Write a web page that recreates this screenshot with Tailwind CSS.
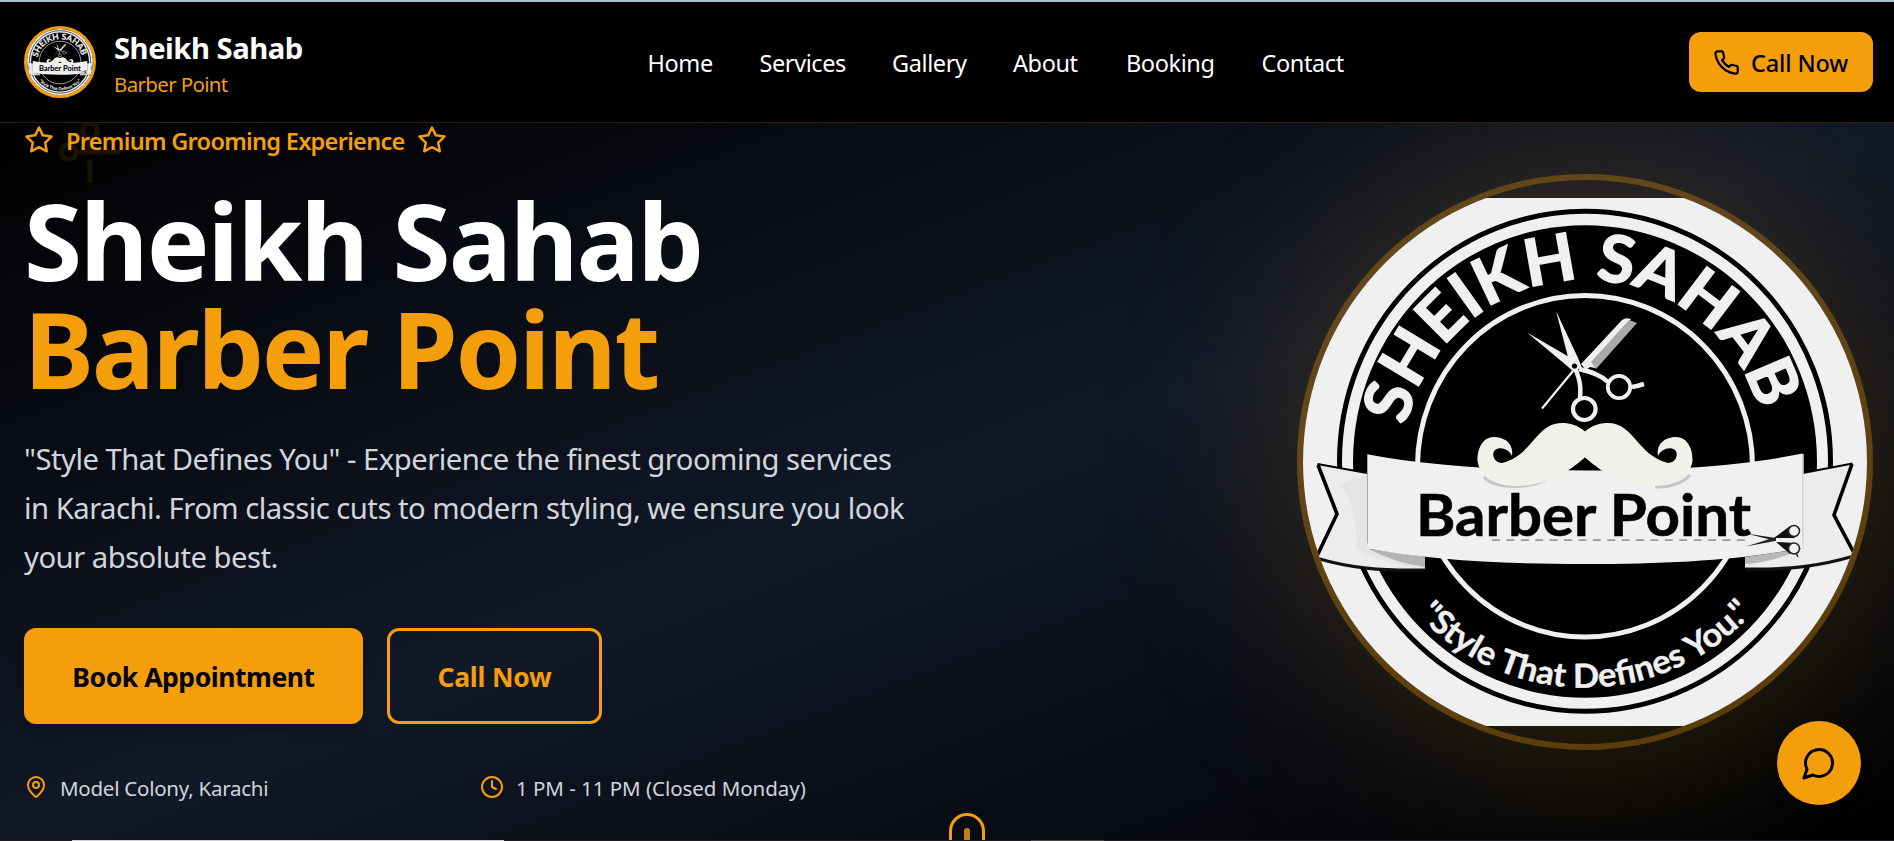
<!DOCTYPE html>
<html lang="en">
<head>
<meta charset="utf-8">
<title>Sheikh Sahab Barber Point</title>
<script src="https://cdn.jsdelivr.net/npm/@tailwindcss/browser@4"></script>
</head>
<body class="relative h-[841px] overflow-hidden bg-black font-['Noto_Sans',sans-serif] text-white">

<!-- Page edge above the header -->
<div class="h-px bg-[#b4c4b2]"></div>
<div class="h-px bg-[#9cc0e8]"></div>

<header class="relative z-20 flex h-[121px] items-center border-b border-[#2f1e02] bg-black pr-[21px] pl-6">
  <div class="flex w-[623.500px] items-center gap-[18px]">
    <div class="size-[72px] shrink-0 overflow-hidden rounded-full border-[3px] border-[#f59e0b]">
      <svg class="block size-full" viewBox="1321 198 528 528"><use href="#badge"/></svg>
    </div>
    <div class="pt-[3px] whitespace-nowrap">
      <div class="text-[29.25px] leading-10 font-bold tracking-[-0.5px]">Sheikh Sahab</div>
      <div class="text-[20.5px] leading-8 tracking-[-0.65px] text-[#f59e0b]">Barber Point</div>
    </div>
  </div>
  <nav class="flex pt-px text-[23.5px] leading-9 tracking-[-0.4px]">
    <a class="w-[112px]">Home</a>
    <a class="w-[132.500px]">Services</a>
    <a class="w-[121px]">Gallery</a>
    <a class="w-[113px]">About</a>
    <a class="w-[135.500px]">Booking</a>
    <a>Contact</a>
  </nav>
  <a class="ml-auto flex h-[60px] w-[184px] items-center gap-[11px] rounded-xl bg-[#f59e0b] pl-6 text-[23.5px] leading-9 font-medium tracking-[-0.15px] whitespace-nowrap text-black">
    <svg class="size-[27px] shrink-0" viewBox="0 0 24 24" fill="none" stroke="currentColor" stroke-width="2" stroke-linecap="round" stroke-linejoin="round"><path d="M22 16.920v3a2 2 0 0 1-2.180 2 19.790 19.790 0 0 1-8.630-3.070 19.500 19.500 0 0 1-6-6 19.790 19.790 0 0 1-3.070-8.670A2 2 0 0 1 4.110 2h3a2 2 0 0 1 2 1.720 12.840 12.840 0 0 0 .7 2.810 2 2 0 0 1-.45 2.110L8.090 9.910a16 16 0 0 0 6 6l1.270-1.270a2 2 0 0 1 2.110-.45 12.840 12.840 0 0 0 2.810.7A2 2 0 0 1 22 16.920z"/></svg>
    <span class="pt-px">Call Now</span>
  </a>
</header>

<main class="relative flex h-[717px] justify-between overflow-hidden bg-linear-to-br/srgb from-black via-[#111827] to-black pr-[21px] pl-6">
  <!-- drifting scissors -->
  <svg class="absolute top-[-1px] left-[60px] size-[60px] rotate-45 text-[#f59e0b] opacity-10" viewBox="0 0 24 24" fill="none" stroke="currentColor" stroke-width="2" stroke-linecap="round" stroke-linejoin="round"><path d="M9 6a3 3 0 1 1-6 0a3 3 0 1 1 6 0M8.120 8.120L12 12M20 4L8.120 15.880M9 18a3 3 0 1 1-6 0a3 3 0 1 1 6 0M14.800 14.800L20 20"/></svg>

  <div class="relative w-[900px]">
    <div class="flex h-9 items-center gap-3 text-[23.5px] leading-9 font-semibold tracking-[-0.7px] whitespace-nowrap text-[#f59e0b]">
      <svg class="mb-[3px] size-[30px] shrink-0" viewBox="0 0 24 24" fill="none" stroke="currentColor" stroke-width="2" stroke-linejoin="round"><path d="M12 2l3.090 6.260L22 9.270l-5 4.870 1.180 6.880L12 17.770l-6.180 3.250L7 14.140 2 9.270l6.910-1.010L12 2z"/></svg>
      <span class="w-[339px]">Premium Grooming Experience</span>
      <svg class="mb-[3px] size-[30px] shrink-0" viewBox="0 0 24 24" fill="none" stroke="currentColor" stroke-width="2" stroke-linejoin="round"><path d="M12 2l3.090 6.260L22 9.270l-5 4.870 1.180 6.880L12 17.770l-6.180 3.250L7 14.140 2 9.270l6.910-1.010L12 2z"/></svg>
    </div>
    <h1 class="mt-[27px] text-[105.3px] leading-[108px] font-bold whitespace-nowrap">
      <span class="block tracking-[-1.9px]">Sheikh Sahab</span>
      <span class="block tracking-[-2.25px] text-[#f59e0b]">Barber Point</span>
    </h1>
    <p class="mt-[33px] text-[29.25px] leading-[48.75px] tracking-[-0.52px] whitespace-nowrap text-gray-300">"Style That Defines You" - Experience the finest grooming services<br>in Karachi. From classic cuts to modern styling, we ensure you look<br>your absolute best.</p>
    <div class="mt-[46.75px] flex h-24 gap-6 text-[26.5px] font-bold whitespace-nowrap">
      <a class="flex w-[339px] items-center justify-center rounded-xl bg-[#f59e0b] pt-1 tracking-[-0.45px] text-black shadow-lg">Book Appointment</a>
      <a class="flex w-[215px] items-center justify-center rounded-xl border-[3px] border-[#f59e0b] pt-1 tracking-[-0.2px] text-[#f59e0b]">Call Now</a>
    </div>
    <div class="mt-[49px] grid h-[30px] grid-cols-[444px_1fr] gap-3 text-[20.5px] leading-[30px] whitespace-nowrap text-gray-300">
      <div class="flex items-center gap-3 tracking-[-0.25px]">
        <svg class="mb-[2px] size-6 text-[#f59e0b]" viewBox="0 0 24 24" fill="none" stroke="currentColor" stroke-width="2" stroke-linecap="round" stroke-linejoin="round"><path d="M20 10c0 4.993-5.539 10.193-7.399 11.799a1 1 0 0 1-1.202 0C9.539 20.193 4 14.993 4 10a8 8 0 0 1 16 0"/><circle cx="12" cy="10" r="3"/></svg>
        Model Colony, Karachi
      </div>
      <div class="flex items-center gap-3 tracking-[-0.04px]">
        <svg class="mb-[2px] size-6 text-[#f59e0b]" viewBox="0 0 24 24" fill="none" stroke="currentColor" stroke-width="2" stroke-linecap="round" stroke-linejoin="round"><circle cx="12" cy="12" r="10"/><path d="M12 6v6l4 2"/></svg>
        1 PM - 11 PM (Closed Monday)
      </div>
    </div>
  </div>

  <div class="relative mt-[51px] size-[576px]">
    <div class="absolute inset-0 rounded-full bg-[#f59e0b]/20 blur-[96px]"></div>
    <div class="relative size-full overflow-hidden rounded-full border-[6px] border-[#f59e0b]/30">
      <svg class="block size-full" viewBox="1303 180 564 564">
        <g id="badge">
          <rect x="1297" y="198" width="576" height="528" fill="#f0f0f0"/>
          <ellipse cx="1585" cy="461.300" rx="245.500" ry="250" fill="none" stroke="#000" stroke-width="5"/>
          <ellipse cx="1585" cy="461.500" rx="232" ry="236.300" fill="#000"/>
          <ellipse cx="1585" cy="466.200" rx="167.500" ry="170.800" fill="none" stroke="#f0f0f0" stroke-width="5"/>
          <path id="arcTop" d="M1406.500 426A182 182 0 0 1 1763 424" fill="none"/>
          <path id="arcBottom" d="M1418 615A227 227 0 0 0 1757 608" fill="none"/>
          <text font-family="Lato" font-weight="700" font-size="65" fill="#f0f0f0" stroke="#f0f0f0" stroke-width="1.500" textLength="484" lengthAdjust="spacingAndGlyphs"><textPath href="#arcTop">SHEIKH SAHAB</textPath></text>
          <text font-family="Lato" font-weight="700" font-size="33" fill="#f0f0f0" stroke="#f0f0f0" stroke-width=".4" textLength="376" lengthAdjust="spacingAndGlyphs"><textPath href="#arcBottom">"Style That Defines You."</textPath></text>
          <!-- scissors and comb -->
          <path d="M1573 371L1542 408.500" stroke="#f0f0f0" stroke-width="2.200"/>
          <path d="M1581 364L1622 320Q1626 317 1631 319L1595 368L1590 367L1586 370Z" fill="#f0f0f0"/>
          <path d="M1591 362L1629 320L1637 323L1596 369Z" fill="#aaa"/>
          <path d="M1527 332.500L1571 358L1580 368L1574 372L1566 365Z M1556 311L1578 358L1582 368L1574 370L1568 357Z" fill="#f0f0f0"/>
          <path d="M1575 368C1580 380 1581 386 1580 398M1579 369C1592 372 1601 375 1608 382M1632 387L1637 386L1644 384" fill="none" stroke="#f0f0f0" stroke-width="4.500"/>
          <ellipse cx="1584.300" cy="409" rx="11.300" ry="11" fill="none" stroke="#f0f0f0" stroke-width="4.200"/>
          <circle cx="1619" cy="387" r="11.200" fill="none" stroke="#f0f0f0" stroke-width="3.800"/>
          <circle cx="1574.500" cy="366" r="2.600" fill="#000"/>
          <!-- ribbon tails -->
          <path d="M1317.500 464L1367 473V549L1425 557V570C1385 571 1350 566 1318 557L1337.500 514Z" fill="#ececec"/>
          <path d="M1367 475V549L1425 559V568Q1385 566 1357 549Q1356 500 1340 484Z" fill="#dedede" opacity=".5"/>
          <path d="M1852.500 463L1802.700 473V549L1745 559V569C1790 570 1820 566 1852 556L1834 515Z" fill="#ececec"/>
          <path d="M1367 473L1317.500 464" stroke="#000" stroke-width="1.800" fill="none"/>
          <path d="M1318 465L1337 514L1317 556M1852 464L1834 515L1854 553" stroke="#000" stroke-width="3.600" fill="none"/>
          <path d="M1802.700 473L1852.500 463.500" stroke="#000" stroke-width="1.800"/>
          <path d="M1316 558C1350 568 1380 571 1425 570M1745 569C1790 570 1820 566 1854 556" stroke="#111" stroke-width="3.200" fill="none"/>
          <!-- ribbon folds -->
          <path d="M1369 549L1425 557V567Q1395 563 1369 549Z" fill="#b4b4b4"/>
          <path d="M1801 549L1745 557V564Q1775 562 1801 549Z" fill="#b8b8b8"/>
          <!-- ribbon front -->
          <path d="M1367.300 454.300C1430 466 1500 470.500 1585 470.500C1670 470.500 1740 466 1802.700 453.500V548C1740 560 1670 564 1585 564C1500 564 1430 560 1367.300 548.500Z" fill="#f0f0f0"/>
          <path d="M1803 454V549" stroke="#dcdcdc" stroke-width="1.500"/>
          <path d="M1484 477C1494 489 1528 489 1546 480M1655 487C1670 488 1684 482 1690 475" stroke="#999" stroke-width="3" opacity=".5" fill="none"/>
          <!-- moustache -->
          <path id="half" d="M1584.500 432C1592 425 1600 423 1608 423C1634 423 1637 455 1668 463C1676 463 1679 454 1675 450C1670 446 1661 449 1658 456C1656 443 1666 437 1676 437C1688 437 1693 450 1692.500 461C1690 478 1672 486 1655 486C1625 486 1605 475 1584.500 457Z" fill="#eff2ea"/>
          <use href="#half" transform="translate(3170 0) scale(-1 1)"/>
          <text x="1416" y="535.500" font-family="Lato" font-weight="700" font-size="58" fill="#000" stroke="#000" stroke-width=".6" textLength="335" lengthAdjust="spacingAndGlyphs">Barber Point</text>
          <path d="M1492 540.200H1750" stroke="#999" stroke-width="1.800" stroke-dasharray="8 6.400"/>
          <!-- cutting scissors -->
          <path d="M1746 533.500L1776 538L1776 541Z M1746 546.500L1776 537L1775 541Z" fill="#222"/>
          <path d="M1774 538L1790 526L1795 538Z M1776 542L1795 543L1790 554Z" fill="#111"/>
          <circle cx="1794" cy="531" r="5.500" fill="#f0f0f0" stroke="#222" stroke-width="1.500"/>
          <circle cx="1794" cy="548.500" r="5.500" fill="#f0f0f0" stroke="#222" stroke-width="1.500"/>
          <path d="M1796 553L1798 557" stroke="#222" stroke-width="1.500"/>
        </g>
      </svg>
    </div>
  </div>

  <!-- scroll hint -->
  <div class="absolute top-[690px] left-[949px] flex h-[60px] w-9 justify-center rounded-full border-[3px] border-[#f59e0b] pt-3">
    <div class="h-[18px] w-[6px] rounded-full bg-[#f59e0b]/80"></div>
  </div>
</main>

<!-- Top edge of the next section -->
<div class="flex h-px bg-[#1c1c20]">
  <div class="ml-[72px] w-[432px] bg-[#d0d0d4]"></div>
  <div class="ml-[527px] w-[73px] bg-[#48484a]"></div>
</div>

<!-- chat button -->
<div class="absolute top-[721px] left-[1777px] z-30 flex size-[84px] items-center justify-center rounded-full bg-[#f59e0b] text-black shadow-lg">
  <svg class="size-9" viewBox="0 0 24 24" fill="none" stroke="currentColor" stroke-width="2" stroke-linecap="round" stroke-linejoin="round"><path d="M7.900 20A9 9 0 1 0 4 16.100L2 22Z"/></svg>
</div>
</body>
</html>
